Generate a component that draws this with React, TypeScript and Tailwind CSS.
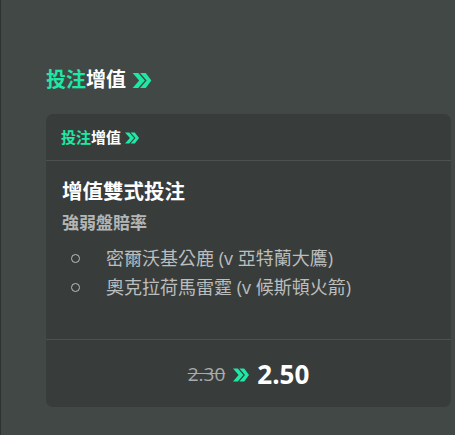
import React from 'react';

function Chevrons({ className }: { className?: string }) {
  return (
    <svg viewBox="0 0 20 16" className={className} fill="currentColor">
      <path d="M0 0h6l7 8-7 8H0l7-8z" />
      <path d="M8 0h6l6 8-6 8H8l7-8z" />
    </svg>
  );
}

const matches = [
  '密爾沃基公鹿 (v 亞特蘭大鷹)',
  '奧克拉荷馬雷霆 (v 候斯頓火箭)',
];

export default function App() {
  return (
    <div
      className="w-[455px] h-[435px] overflow-hidden bg-[#414846] border-l border-[#2e3231] text-white"
      style={{ fontFamily: '"Open Sans", "Noto Sans CJK TC", sans-serif' }}
    >
      <div className="pl-[45px] pt-[67px]">
        <div className="flex items-center h-[26px]">
          <span className="text-[20px] font-bold text-[#1ee8a6]">投注</span>
          <span className="text-[20px] font-bold">增值</span>
          <Chevrons className="w-[20px] h-[15px] ml-[6px] text-[#1ee8a6]" />
        </div>

        <div className="mt-[21px] w-[405px] h-[293px] rounded-[7px] bg-[#383d3c] flex flex-col">
          <div className="h-[47px] border-b border-[#4c5251] flex items-center pl-[15px] pt-[1px]">
            <span className="text-[15px] font-bold text-[#1ee8a6]">投注</span>
            <span className="text-[15px] font-bold">增值</span>
            <Chevrons className="w-[14px] h-[12px] ml-[4px] text-[#1ee8a6]" />
          </div>

          <div className="flex-1 pl-[16px] pt-[17px]">
            <div className="text-[20.5px] font-bold leading-[26px]">增值雙式投注</div>
            <div className="mt-[7px] text-[17px] font-bold text-[#b4b6b5] leading-[24px]">強弱盤賠率</div>
            <ul className="mt-[9px]">
              {matches.map((m) => (
                <li key={m} className="flex items-center h-[29px] text-[18px] text-[#bcbebd]">
                  <span className="ml-[9px] w-[9px] h-[9px] rounded-full border border-[#bcbebd]" />
                  <span className="ml-[26px]">{m}</span>
                </li>
              ))}
            </ul>
          </div>

          <div className="h-[68px] border-t border-[#4c5251] flex items-center justify-center gap-[8px] pt-[2px]">
            <span className="text-[19px] text-[#a9abaa] line-through">2.30</span>
            <Chevrons className="w-[16px] h-[14px] text-[#1ee8a6]" />
            <span className="text-[26px] font-bold">2.50</span>
          </div>
        </div>
      </div>
    </div>
  );
}
